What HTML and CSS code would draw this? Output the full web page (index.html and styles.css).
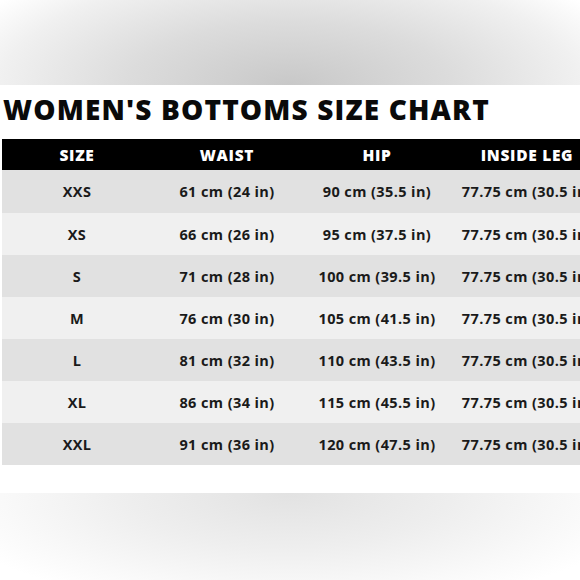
FILE: index.html
```html
<!DOCTYPE html>
<html>
<head>
<meta charset="utf-8">
<link rel="stylesheet" href="styles.css">
</head>
<body>
<div class="page">
  <div class="shade-top"></div>
  <h1 class="title">WOMEN'S BOTTOMS SIZE CHART</h1>
  <table class="chart">
    <thead>
      <tr><th>SIZE</th><th>WAIST</th><th>HIP</th><th>INSIDE LEG</th></tr>
    </thead>
    <tbody>
      <tr><td>XXS</td><td>61 cm (24 in)</td><td>90 cm (35.5 in)</td><td>77.75 cm (30.5 in)</td></tr>
      <tr><td>XS</td><td>66 cm (26 in)</td><td>95 cm (37.5 in)</td><td>77.75 cm (30.5 in)</td></tr>
      <tr><td>S</td><td>71 cm (28 in)</td><td>100 cm (39.5 in)</td><td>77.75 cm (30.5 in)</td></tr>
      <tr><td>M</td><td>76 cm (30 in)</td><td>105 cm (41.5 in)</td><td>77.75 cm (30.5 in)</td></tr>
      <tr><td>L</td><td>81 cm (32 in)</td><td>110 cm (43.5 in)</td><td>77.75 cm (30.5 in)</td></tr>
      <tr><td>XL</td><td>86 cm (34 in)</td><td>115 cm (45.5 in)</td><td>77.75 cm (30.5 in)</td></tr>
      <tr><td>XXL</td><td>91 cm (36 in)</td><td>120 cm (47.5 in)</td><td>77.75 cm (30.5 in)</td></tr>
    </tbody>
  </table>
  <div class="shade-bottom"></div>
</div>
</body>
</html>
```

FILE: styles.css
```css
html, body {
  margin: 0;
  padding: 0;
  background: #fff;
}
.page {
  width: 580px;
  height: 580px;
  overflow: hidden;
  display: flex;
  flex-direction: column;
  font-family: "Open Sans", "Liberation Sans", sans-serif;
}
.shade-top {
  height: 85px;
  flex: none;
  background: radial-gradient(ellipse 360px 140px at 50% 100%, #c8c8c8 0%, #dcdcdc 45%, #f0f0f0 80%, #fff 100%);
}
.title {
  flex: none;
  margin: 0;
  height: 54px;
  box-sizing: border-box;
  padding: 6px 0 0 3px;
  font-size: 28px;
  line-height: 36px;
  font-weight: 800;
  color: #0a0a0a;
  letter-spacing: 1.15px;
  white-space: nowrap;
}
.chart {
  flex: none;
  margin-left: 2px;
  width: 600px;
  table-layout: fixed;
  border-collapse: collapse;
  border-spacing: 0;
}
.chart th, .chart td {
  width: 150px;
  padding: 0;
  text-align: center;
  white-space: nowrap;
  font-weight: 700;
}
.chart th {
  height: 31px;
  background: #000;
  color: #fff;
  font-size: 15.5px;
  font-weight: 800;
  letter-spacing: 0.7px;
}
.chart td {
  height: 42px;
  color: #1a1a1a;
  font-size: 14.5px;
  letter-spacing: 0.4px;
}
.chart tbody tr:nth-child(odd) td {
  background: #e1e1e1;
}
.chart tbody tr:nth-child(even) td {
  background: #f0f0f0;
}
.chart tbody tr:first-child td {
  height: 43px;
}
.shade-bottom {
  flex: none;
  margin-top: 28px;
  height: 90px;
  background: radial-gradient(ellipse 360px 120px at 50% 0%, #e2e2e2 0%, #eeeeee 45%, #f9f9f9 80%, #fff 100%);
}
```
